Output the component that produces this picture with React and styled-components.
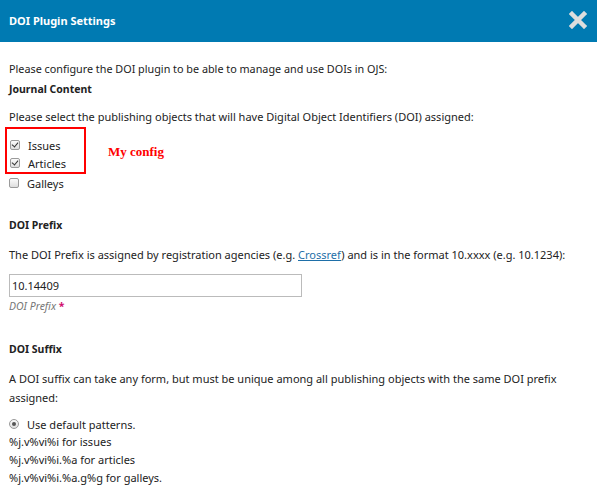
import React from "react";
import styled, { createGlobalStyle } from "styled-components";

const GlobalStyle = createGlobalStyle`
  html, body {
    margin: 0;
    padding: 0;
    background: #fff;
  }
  body {
    font-family: "Noto Sans", "Open Sans", sans-serif;
    color: #222;
  }
`;

const Modal = styled.div`
  width: 597px;
  height: 500px;
  overflow: hidden;
  background: #fff;
`;

const Header = styled.div`
  height: 42px;
  background: #007ab2;
  display: flex;
  align-items: center;
  justify-content: space-between;
  padding: 0 9px 2px 9px;
  box-sizing: border-box;
`;

const Title = styled.h1`
  margin: 0;
  font-size: 11px;
  font-weight: bold;
  color: #fff;
`;

const CloseButton = styled.button`
  border: 0;
  background: transparent;
  padding: 0;
  width: 20px;
  height: 20px;
  display: flex;
  align-items: center;
  justify-content: center;
  cursor: pointer;
`;

const Body = styled.div`
  padding: 16px 10px 0 9px;
  font-size: 11px;
`;

const Intro = styled.p`
  margin: 0;
  font-size: 10.8px;
  line-height: 21px;
`;

const SectionTitle = styled.h2`
  margin: ${(p) => p.$top || 0}px 0 0 0;
  font-size: 10.5px;
  font-weight: bold;
  line-height: 20px;
`;

const Desc = styled.p`
  margin: ${(p) => p.$top || 0}px 0 0 0;
  line-height: 19px;
`;

const Link = styled.a`
  color: #1e6fa8;
  text-decoration: underline;
`;

const ChoiceArea = styled.div`
  display: flex;
  align-items: flex-start;
  margin-top: 1px;
`;

const ChoiceList = styled.div`
  display: flex;
  flex-direction: column;
`;

const Highlight = styled.div`
  border: 2px solid #f00;
  margin-left: -4px;
  padding: 7px 18px 0 3px;
  display: flex;
  flex-direction: column;
`;

const Option = styled.label`
  display: flex;
  align-items: center;
  height: 18px;
  gap: 8px;
  margin-top: ${(p) => p.$top || 0}px;
`;

const Check = styled.input`
  appearance: none;
  margin: 0;
  width: 10px;
  height: 10px;
  border: 1px solid #9a9a9a;
  border-radius: ${(p) => (p.type === "radio" ? "50%" : "2px")};
  background: linear-gradient(#fbfbfb, #dedede);
  box-sizing: border-box;
  position: relative;
  flex: none;

  &:checked::after {
    content: "";
    position: absolute;
    ${(p) =>
      p.type === "radio"
        ? `left: 2px; top: 2px; width: 4px; height: 4px; border-radius: 50%; background: #555;`
        : `left: 2px; top: 0px; width: 3px; height: 5px; border: solid #333; border-width: 0 1.5px 1.5px 0; transform: rotate(40deg);`}
  }
`;

const Note = styled.span`
  font-family: "Liberation Serif", serif;
  font-weight: bold;
  font-size: 13px;
  color: #f00;
  margin: 17px 0 0 22px;
`;

const Field = styled.input`
  display: block;
  margin: 10px 0 0 0;
  width: 293px;
  height: 23px;
  box-sizing: border-box;
  border: 1px solid #bbb;
  padding: 0 2px;
  font-family: inherit;
  font-size: 11px;
  color: #222;
`;

const FieldLabel = styled.div`
  font-size: 10.5px;
  font-style: italic;
  color: #777;
  line-height: 18px;
`;

const Required = styled.span`
  color: #d00a6c;
  font-style: normal;
  font-weight: bold;
`;

const Pattern = styled.div`
  line-height: 18px;
`;

export default function App() {
  return (
    <Modal>
      <GlobalStyle />
      <Header>
        <Title>DOI Plugin Settings</Title>
        <CloseButton aria-label="Close">
          <svg width="18" height="18" viewBox="0 0 18 18">
            <path d="M3 3 L15 15 M15 3 L3 15" stroke="#ddd" strokeWidth="4.5" strokeLinecap="square" />
          </svg>
        </CloseButton>
      </Header>
      <Body>
        <Intro>Please configure the DOI plugin to be able to manage and use DOIs in OJS:</Intro>
        <SectionTitle>Journal Content</SectionTitle>
        <Desc $top={8}>
          Please select the publishing objects that will have Digital Object Identifiers (DOI) assigned:
        </Desc>
        <ChoiceArea>
          <ChoiceList>
            <Highlight>
              <Option>
                <Check type="checkbox" defaultChecked />
                Issues
              </Option>
              <Option>
                <Check type="checkbox" defaultChecked />
                Articles
              </Option>
            </Highlight>
            <Option>
              <Check type="checkbox" />
              Galleys
            </Option>
          </ChoiceList>
          <Note>My config</Note>
        </ChoiceArea>

        <SectionTitle $top={23}>DOI Prefix</SectionTitle>
        <Desc $top={10}>
          The DOI Prefix is assigned by registration agencies (e.g. <Link href="#">Crossref</Link>) and is in the format
          10.xxxx (e.g. 10.1234):
        </Desc>
        <Field type="text" defaultValue="10.14409" />
        <FieldLabel>
          DOI Prefix <Required>*</Required>
        </FieldLabel>

        <SectionTitle $top={24}>DOI Suffix</SectionTitle>
        <Desc $top={10}>
          A DOI suffix can take any form, but must be unique among all publishing objects with the same DOI prefix
          assigned:
        </Desc>
        <Option $top={8}>
          <Check type="radio" defaultChecked />
          Use default patterns.
        </Option>
        <Pattern>%j.v%vi%i for issues</Pattern>
        <Pattern>%j.v%vi%i.%a for articles</Pattern>
        <Pattern>%j.v%vi%i.%a.g%g for galleys.</Pattern>
      </Body>
    </Modal>
  );
}
